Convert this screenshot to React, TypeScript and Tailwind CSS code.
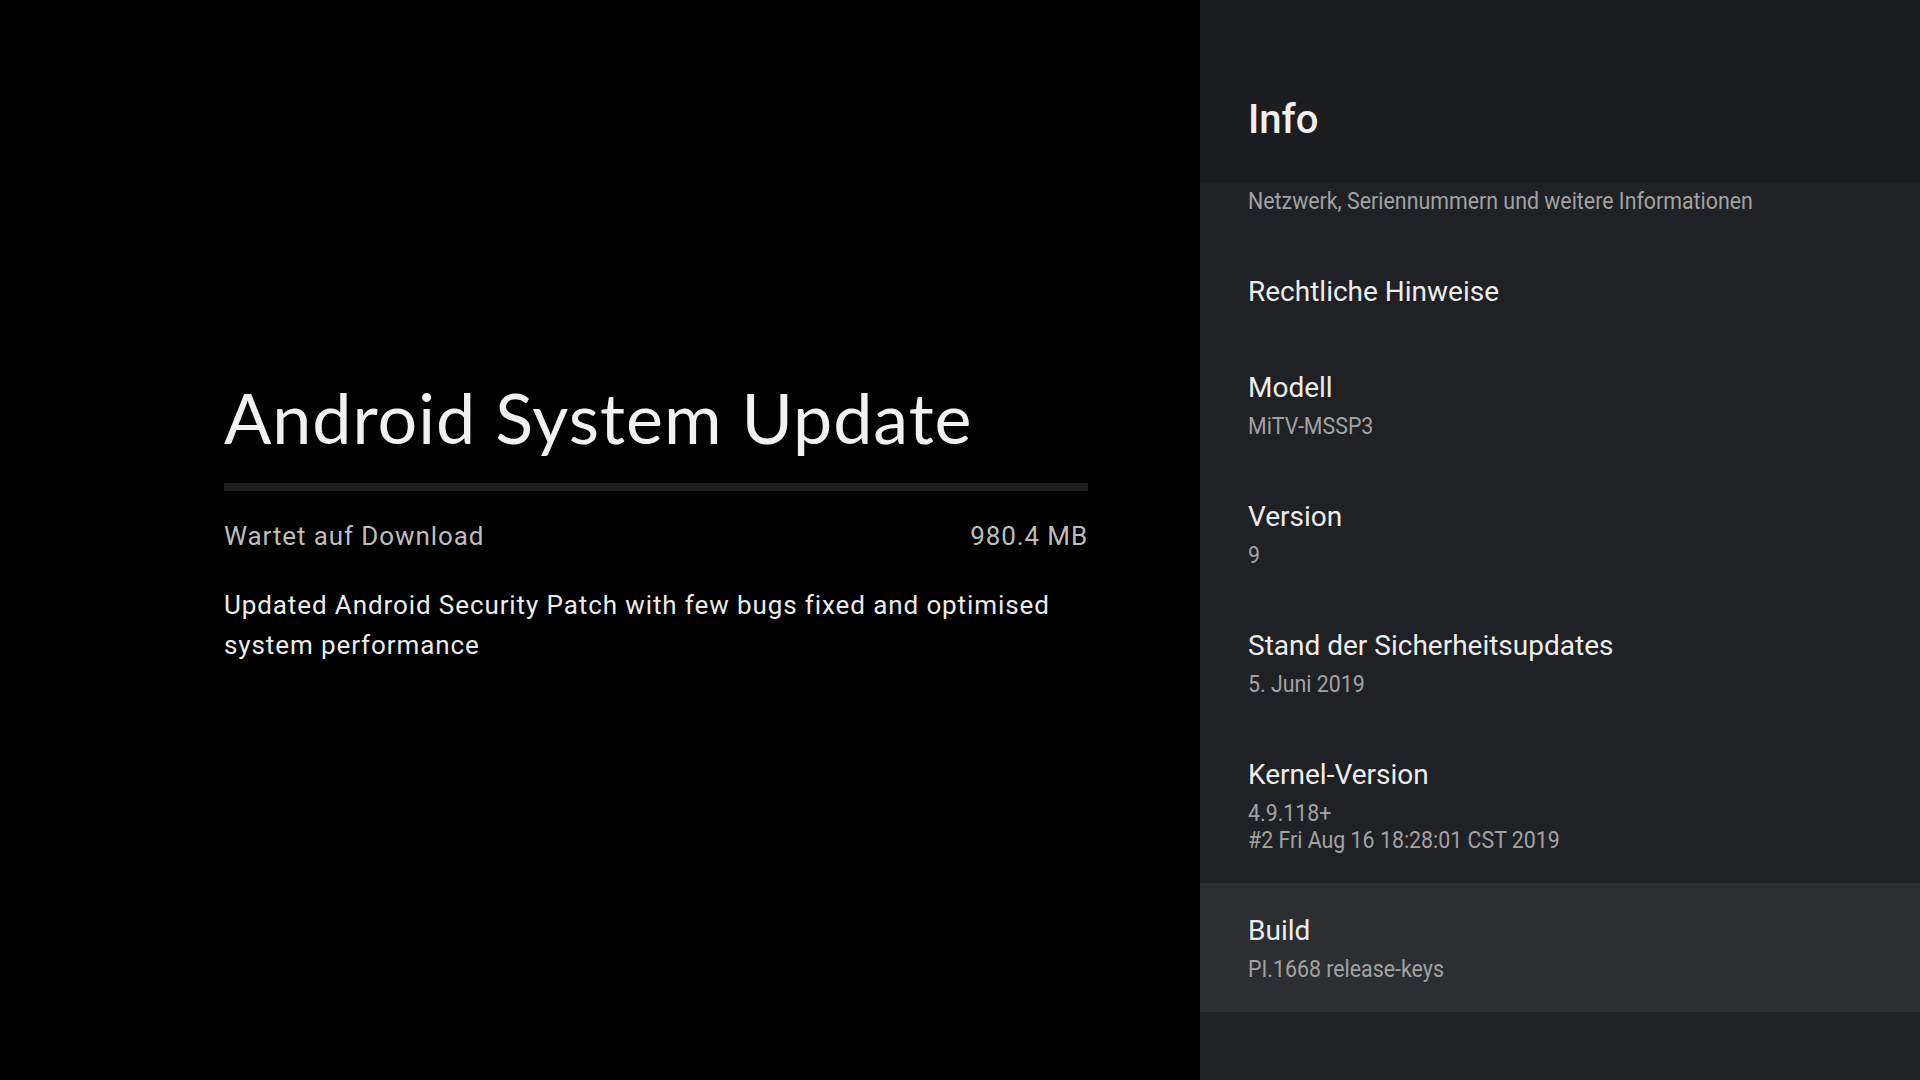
const settings = [
  { title: "", summary: ["Netzwerk, Seriennummern und weitere Informationen"] },
  { title: "Rechtliche Hinweise", summary: [] },
  { title: "Modell", summary: ["MiTV-MSSP3"] },
  { title: "Version", summary: ["9"] },
  { title: "Stand der Sicherheitsupdates", summary: ["5. Juni 2019"] },
  { title: "Kernel-Version", summary: ["4.9.118+", "#2 Fri Aug 16 18:28:01 CST 2019"] },
  { title: "Build", summary: ["PI.1668 release-keys"], focused: true },
]

const App = () => {
  return (
    <div className="flex w-[1920px] h-[1080px] overflow-hidden bg-black font-['Roboto',sans-serif]">

      {/* update panel */}
      <div className="flex flex-col justify-center w-[1200px] pl-[224px] pr-[112px] pb-[38px]">
        <h1 className="text-[70px] leading-[80px] text-[#f1f1f1] font-['Lato',sans-serif] tracking-[1px]">
          Android System Update
        </h1>
        <div className="h-2 mt-[26px] bg-[#1e1e1e]" />
        <div className="flex justify-between mt-[27px] text-[26px] leading-[36px] tracking-[0.9px] text-[#bdbdbd]">
          <span>Wartet auf Download</span>
          <span>980.4 MB</span>
        </div>
        <p className="mt-[31px] text-[26px] leading-[40px] tracking-[0.9px] text-[#ececec]">
          Updated Android Security Patch with few bugs fixed and optimised
          system performance
        </p>
      </div>

      {/* settings panel, list scrolled so the first row's title sits under the header */}
      <div className="flex flex-col flex-1 bg-[#202124]">
        <div className="h-[182px] px-[48px] pt-[96px] bg-[#1c1d20] border-b border-[#18191b]">
          <h2 className="text-[40px] leading-[48px] font-medium text-[#efefef]">Info</h2>
        </div>
        <div className="flex flex-col flex-1 overflow-hidden">
          {settings.map(item => (
            <div
              key={item.summary[0] ?? item.title}
              className={
                item.focused
                  ? "pl-[48px] pr-8 pt-[28px] pb-[29px] bg-[#2d2e32]"
                  : !item.title
                    ? "pl-[48px] pr-8 pt-[6px] pb-[29px]"
                    : item.summary.length === 0
                      ? "pl-[48px] pr-8 pt-[28px] pb-[28px]"
                      : "pl-[48px] pr-8 pt-[28px] pb-[29px]"
              }
            >
              {item.title && (
                <div className="text-[28px] leading-[40px] text-[#ededed]">{item.title}</div>
              )}
              {item.summary.length > 0 && (
                <div
                  className={
                    item.title
                      ? "mt-[5px] origin-left scale-x-[0.89] text-[24px] leading-[27px] text-[#a2a2a2]"
                      : "origin-left scale-x-[0.89] text-[24px] leading-[27px] text-[#a2a2a2]"
                  }
                >
                  {item.summary.map(line => (
                    <div key={line}>{line}</div>
                  ))}
                </div>
              )}
            </div>
          ))}
        </div>
      </div>

    </div>
  )
}

export default App
